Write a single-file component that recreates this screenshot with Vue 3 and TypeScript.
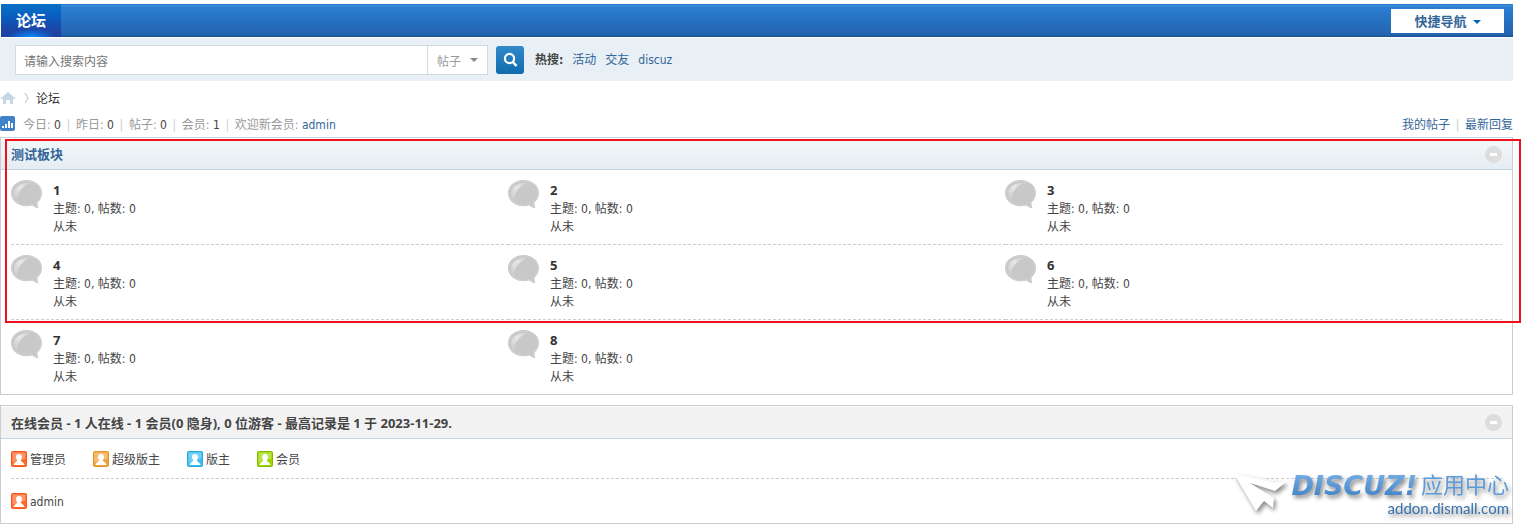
<script setup lang="ts">
import { ref } from 'vue'

interface Forum {
  id: number
  topics: number
  posts: number
}

const forums: Forum[] = Array.from({ length: 8 }, (_, i) => ({ id: i + 1, topics: 0, posts: 0 }))

const columns = 3
const lastRowStart = Math.floor((forums.length - 1) / columns) * columns

const stats = [
  { label: '今日', value: '0' },
  { label: '昨日', value: '0' },
  { label: '帖子', value: '0' },
  { label: '会员', value: '1' },
]

const roles = [
  { name: '管理员', tone: 'orange' },
  { name: '超级版主', tone: 'amber' },
  { name: '版主', tone: 'blue' },
  { name: '会员', tone: 'green' },
]

const hotWords = ['活动', '交友', 'discuz']
const keyword = ref('')
const forumsOpen = ref(true)
const onlineOpen = ref(true)
</script>

<template>
  <div class="page">
    <nav class="nav">
      <a class="nav-tab" href="#">论坛</a>
      <button class="quick" type="button">
        快捷导航
        <svg width="8" height="4" viewBox="0 0 8 4" aria-hidden="true"><path d="M0 0h8L4 4z" fill="#0066b3" /></svg>
      </button>
    </nav>

    <form class="search" @submit.prevent>
      <div class="search-box">
        <input v-model="keyword" class="search-input" type="text" placeholder="请输入搜索内容" aria-label="搜索内容" />
        <div class="search-type">
          <select aria-label="搜索类型">
            <option>帖子</option>
          </select>
          <svg width="8" height="4" viewBox="0 0 8 4" aria-hidden="true"><path d="M0 0h8L4 4z" fill="#888" /></svg>
        </div>
      </div>
      <button class="search-btn" type="submit" aria-label="搜索">
        <svg width="28" height="28" viewBox="0 0 28 28" aria-hidden="true">
          <circle cx="13.5" cy="12.5" r="4.6" fill="none" stroke="#fff" stroke-width="2.2" />
          <path d="M16.5 15.5l4 4.5" stroke="#fff" stroke-width="2.6" />
        </svg>
      </button>
      <div class="hot">
        <strong>热搜:</strong>
        <a v-for="word in hotWords" :key="word" href="#">{{ word }}</a>
      </div>
    </form>

    <div class="crumbs">
      <a href="#" aria-label="首页">
        <svg width="16" height="14" viewBox="0 0 16 14" aria-hidden="true">
          <path d="M8 1l8 7h-3v5H10V9H6v4H3V8H0z" fill="#c5d5e2" />
        </svg>
      </a>
      <svg class="chevron" width="5" height="12" viewBox="0 0 5 12" aria-hidden="true">
        <path d="M1 1l3 5-3 5" fill="none" stroke="#bbb" />
      </svg>
      <a class="crumb-text" href="#">论坛</a>
    </div>

    <div class="stats">
      <svg width="15" height="15" viewBox="0 0 15 15" aria-hidden="true">
        <rect width="15" height="15" rx="2" fill="#3f82c9" />
        <path d="M2 10h2v2H2zM5 8h2v4H5zM8 5h2v7H8zM11 7h2v5h-2z" fill="#fff" />
      </svg>
      <p class="stat-list">
        <template v-for="s in stats" :key="s.label">
          <span>{{ s.label }}: <em>{{ s.value }}</em></span><i class="pipe">|</i>
        </template>
        <span>欢迎新会员: <a href="#">admin</a></span>
      </p>
      <p class="stat-links">
        <a href="#">我的帖子</a><i class="pipe">|</i><a href="#">最新回复</a>
      </p>
    </div>

    <section class="panel">
      <header class="panel-head category">
        <h2><a href="#">测试板块</a></h2>
        <button class="fold" type="button" aria-label="收起/展开板块" @click="forumsOpen = !forumsOpen"></button>
      </header>
      <ul v-show="forumsOpen" class="forums">
        <li v-for="(forum, i) in forums" :key="forum.id" class="forum" :class="{ ruled: i < lastRowStart }">
          <svg width="32" height="30" viewBox="0 0 32 30" aria-hidden="true">
            <defs>
              <linearGradient :id="'shine' + forum.id" x1="0" y1="1" x2="1" y2="0">
                <stop offset="0" stop-color="#cbcbcb" />
                <stop offset="0.55" stop-color="#e6e6e6" />
                <stop offset="1" stop-color="#cbcbcb" />
              </linearGradient>
            </defs>
            <path d="M15.500 0C24 0 31 5.500 31 13c0 4-2 7.500-4.500 9.500 0 2 .2 4 1 5.800-2.500-.3-4.500-1.300-6-2.800-2 .6-4 .8-6 .8C7 26.300 0 20.500 0 13S7 0 15.500 0z" fill="#c8c8c8" />
            <path d="M15.500 1C23.500 1 30 6 30 13c0 4-2 7-4.500 9 0 2 .1 3.500 .8 5-2-.4-3.800-1-4.800-2.500-2 .6-4 .8-6 .8C7.500 25.300 1 20 1 13S7.500 1 15.500 1z" fill="none" stroke="#d2d2d2" />
            <path d="M6 20C2 16 2 9.500 7 6c4-3 9-4 14-3C14 4 7 10 6 20z" :fill="`url(#shine${forum.id})`" />
          </svg>
          <div class="forum-info">
            <h3><a href="#">{{ forum.id }}</a></h3>
            <p>主题: <em>{{ forum.topics }}</em>, 帖数: <em>{{ forum.posts }}</em></p>
            <p>从未</p>
          </div>
        </li>
      </ul>
    </section>

    <section class="panel online">
      <header class="panel-head">
        <h2>在线会员 - 1 人在线 - 1 会员(0 隐身), 0 位游客 - 最高记录是 1 于 2023-11-29.</h2>
        <button class="fold" type="button" aria-label="收起/展开在线会员" @click="onlineOpen = !onlineOpen"></button>
      </header>
      <div v-show="onlineOpen" class="online-body">
        <ul class="roles">
          <li v-for="role in roles" :key="role.name">
            <svg :class="['badge', role.tone]" width="16" height="16" viewBox="0 0 16 16" aria-hidden="true">
              <rect class="badge-fill" x="0.5" y="0.5" width="15" height="15" rx="1" />
              <path d="M1.500 1.500h13v6l-13 4z" fill="#fff" opacity="0.28" />
              <path d="M8 3c2 0 3 1.200 3 3 0 1.400-.6 2.500-1.300 3.300.3 1.700 3.300 1.800 3.800 4.700h-11c.5-2.900 3.500-3 3.800-4.700C5.600 8.500 5 7.400 5 6c0-1.800 1-3 3-3z" fill="#fff" />
            </svg>
            <span>{{ role.name }}</span>
          </li>
        </ul>
        <ul class="members">
          <li>
            <svg class="badge orange" width="16" height="16" viewBox="0 0 16 16" aria-hidden="true">
              <rect class="badge-fill" x="0.5" y="0.5" width="15" height="15" rx="1" />
              <path d="M1.500 1.500h13v6l-13 4z" fill="#fff" opacity="0.28" />
              <path d="M8 3c2 0 3 1.200 3 3 0 1.400-.6 2.500-1.300 3.300.3 1.700 3.300 1.800 3.800 4.700h-11c.5-2.900 3.500-3 3.800-4.700C5.600 8.500 5 7.400 5 6c0-1.800 1-3 3-3z" fill="#fff" />
            </svg>
            <a href="#">admin</a>
          </li>
        </ul>
      </div>
    </section>

    <div class="highlight" aria-hidden="true"></div>

    <div class="watermark">
      <svg width="56" height="42" viewBox="0 0 56 42" aria-hidden="true">
        <path d="M1 1l52 8-11 9-25-8 24 15-1 10-9-7-8 10z" fill="#fff" />
        <path d="M1 1l52 8-11 1z" fill="#f4f4f4" />
      </svg>
      <div class="mark-text">
        <div class="mark-name"><b>DISCUZ!</b><span>应用中心</span></div>
        <div class="mark-host">addon.dismall.com</div>
      </div>
    </div>
  </div>
</template>

<style>
body {
  margin: 0;
  background: #fff;
}
</style>

<style scoped>
.page {
  position: relative;
  padding: 4px 14px 8px 0;
  font: 12px/18px "DejaVu Sans Condensed", "Noto Sans CJK SC", sans-serif;
  color: #444;
}
.page * {
  box-sizing: border-box;
}
svg {
  display: block;
  flex: none;
}
a {
  color: #369;
  text-decoration: none;
}
em,
i {
  font-style: normal;
}
h2,
h3,
p,
ul {
  margin: 0;
  padding: 0;
}
ul {
  list-style: none;
}
button,
input,
select {
  font: inherit;
}
.nav {
  display: flex;
  align-items: center;
  justify-content: space-between;
  height: 33px;
  margin-left: 1px;
  padding-right: 9px;
  background: linear-gradient(#2b7acd 0 1px, #3b8fd3 1px 2px, #2b7fd3 3px, #2363b0 31px, #1c5494 32px);
}
.nav-tab {
  width: 60px;
  height: 33px;
  padding-top: 2px;
  line-height: 31px;
  text-align: center;
  font-size: 15px;
  font-weight: bold;
  color: #fff;
  background:
    radial-gradient(ellipse 24px 8px at 50% 100%, #0a8cff, transparent),
    linear-gradient(#0a70c4, #0760c0 35%, #1b46a8 75%, #1c3fa0);
}
.quick {
  display: flex;
  align-items: center;
  justify-content: center;
  gap: 6px;
  width: 113px;
  height: 24px;
  padding: 3px 0 0;
  border: 0;
  background: #fff;
  color: #369;
  font-size: 13px;
  font-weight: bold;
}
.search {
  display: flex;
  align-items: center;
  height: 43px;
  margin-top: 1px;
  padding-left: 15px;
  background: #e8eff5;
}
.search-box {
  display: flex;
  width: 473px;
  height: 30px;
  border: 1px solid #cedde4;
  background: #fff;
}
.search-input {
  flex: 1;
  min-width: 0;
  padding: 5px 8px 0;
  border: 0;
  outline: 0;
  background: transparent;
  color: #444;
}
.search-input::placeholder {
  color: #757575;
  opacity: 1;
}
.search-type {
  display: flex;
  align-items: center;
  width: 60px;
  padding: 0 9px;
  border-left: 1px solid #cedde4;
}
.search-type select {
  flex: 1;
  min-width: 0;
  height: 28px;
  padding: 5px 0 0;
  border: 0;
  appearance: none;
  background: transparent;
  color: #999;
}
.search-btn {
  width: 28px;
  height: 28px;
  margin: 0 11px 0 8px;
  padding: 0;
  border: 0;
  border-radius: 3px;
  background: linear-gradient(#3389c9, #106bac);
}
.hot {
  display: flex;
  gap: 9px;
  padding-top: 1px;
}
.crumbs {
  display: flex;
  align-items: center;
  height: 34px;
}
.chevron {
  margin: 0 7px 0 8px;
}
.crumb-text {
  padding-top: 2px;
  color: #333;
}
.stats {
  display: flex;
  align-items: center;
  height: 22px;
  padding-bottom: 5px;
}
.stat-list,
.stat-links {
  padding-top: 2px;
}
.stat-list {
  flex: 1;
  margin-left: 8px;
  color: #999;
}
.stat-list em {
  color: #444;
}
.pipe {
  display: inline-block;
  width: 15px;
  text-align: center;
  color: #ccc;
}
.panel {
  border: 1px solid #cdcdcd;
}
.panel:first-of-type {
  border-top-color: #c2d5e3;
}
.panel-head {
  display: flex;
  align-items: center;
  justify-content: space-between;
  height: 33px;
  padding: 0 10px;
  border-top: 1px solid #fff;
  border-bottom: 1px solid #c2d5e3;
  background: #f2f2f2;
}
.category {
  height: 32px;
  background: linear-gradient(#f3f7f9, #e5edf2);
}
.panel-head h2 {
  font: bold 13px/18px "Noto Sans", "Noto Sans CJK SC", sans-serif;
}
.fold {
  display: grid;
  place-items: center;
  width: 17px;
  height: 17px;
  padding: 0;
  border: 0;
  border-radius: 50%;
  background: #ddd;
}
.fold::before {
  content: "";
  width: 7px;
  height: 3px;
  background: #fff;
}
.forums {
  display: grid;
  grid-template-columns: repeat(3, 1fr);
  padding: 0 10px;
}
.forum {
  display: flex;
  gap: 10px;
  height: 75px;
  padding-top: 10px;
}
.forum:nth-last-child(-n + 2) {
  height: 74px;
}
.ruled {
  background: repeating-linear-gradient(90deg, #cdcdcd 0 3px, transparent 3px 5px) bottom / 100% 1px no-repeat;
}
.forum h3 {
  font: bold 13px/20px "Noto Sans", sans-serif;
}
.forum h3 a {
  color: #333;
}
.online {
  margin-top: 10px;
}
.online-body {
  padding: 0 10px;
}
.roles,
.members {
  display: flex;
  gap: 27px;
  align-items: center;
  height: 40px;
  background: repeating-linear-gradient(90deg, #cdcdcd 0 3px, transparent 3px 5px) bottom / 100% 1px no-repeat;
}
.members {
  height: 44px;
  background: none;
}
.roles li,
.members li {
  display: flex;
  gap: 3px;
  align-items: center;
}
.roles span,
.members a {
  padding-top: 2px;
}
.members a {
  color: #444;
}
.orange .badge-fill { fill: #ff6a2a; stroke: #f8541a; }
.amber .badge-fill { fill: #f0a53c; stroke: #de962e; }
.blue .badge-fill { fill: #3bbdf0; stroke: #27a9dc; }
.green .badge-fill { fill: #9cd800; stroke: #83b800; }
.highlight {
  position: absolute;
  top: 139px;
  left: 5px;
  right: 6px;
  height: 184px;
  border: 2px solid #ed111b;
  pointer-events: none;
}
.watermark {
  position: absolute;
  right: 18px;
  bottom: 15px;
  display: flex;
  gap: 2px;
  pointer-events: none;
  filter: drop-shadow(2px 3px 2px rgb(0 0 0 / 45%));
}
.mark-name {
  display: flex;
  align-items: center;
  justify-content: flex-end;
  gap: 4px;
  height: 26px;
  color: #5b9bd8;
}
.mark-name b {
  font: italic bold 27px/26px "DejaVu Sans", sans-serif;
  color: transparent;
  background: linear-gradient(#76aee6, #3f80c2);
  background-clip: text;
}
.mark-name span {
  font: 22px/26px "DejaVu Sans Condensed", "Noto Sans CJK SC", sans-serif;
}
.mark-host {
  font: 15px/18px Lato, sans-serif;
  text-align: right;
  color: #3673ae;
}
</style>
